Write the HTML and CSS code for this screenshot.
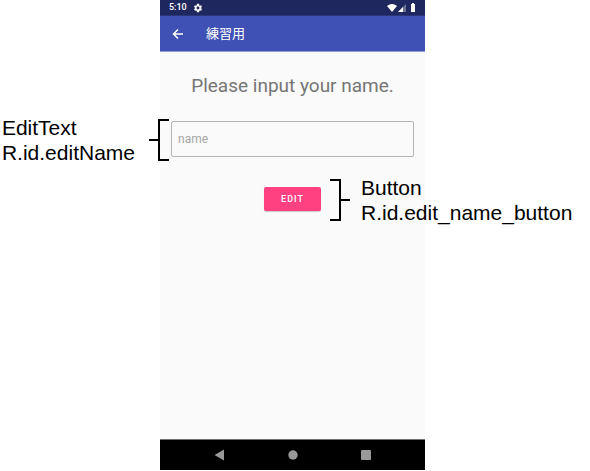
FILE: index.html
```html
<!DOCTYPE html>
<html lang="en">
<head>
<meta charset="utf-8">
<meta name="viewport" content="width=device-width, initial-scale=1">
<title>Name form</title>
<link rel="stylesheet" href="styles.css">
</head>
<body>
<div class="stage">
  <div class="phone">
    <div class="status-bar">
      <span>5:10</span>
      <svg class="gear" viewBox="0 0 24 24" width="10" height="10" aria-hidden="true"><path fill-rule="evenodd" d="M19.4 13a7.500 7.500 0 0 0 0-2l2.300-1.800-2.300-4-2.700 1.100a8 8 0 0 0-1.700-1L14.600 2H9.400L9 5.300a8 8 0 0 0-1.700 1L4.600 5.200l-2.300 4L4.600 11a7.500 7.500 0 0 0 0 2l-2.300 1.800 2.300 4 2.700-1.100a8 8 0 0 0 1.700 1l.4 3.300h5.200l.4-3.300a8 8 0 0 0 1.700-1l2.700 1.100 2.300-4zM12 15.500a3.500 3.500 0 1 1 0-7 3.500 3.500 0 0 1 0 7z"/></svg>
      <svg class="signals" viewBox="0 0 30 10" width="30" height="10" aria-hidden="true">
        <path d="M0 3Q5-1 10 3L5 9z"/>
        <path d="M19 1v8h-8z" opacity=".35"/>
        <path d="M16 4v5h-5z"/>
        <path d="M24 1h1V0h2v1h1v8h-4z"/>
      </svg>
    </div>
    <header class="app-bar">
      <button class="back" type="button" aria-label="Back">
        <svg viewBox="0 0 12 12" width="12" height="12" aria-hidden="true"><path d="M11 6H2M6 1.500L1.500 6 6 10.500"/></svg>
      </button>
      <h1 class="app-title" lang="ja">練習用</h1>
    </header>
    <main class="content">
      <label class="prompt" for="name">Please input your name.</label>
      <div class="field">
        <input class="name-input" id="name" type="text" placeholder="name">
        <div class="callout callout-left">
          <p class="note">EditText<br>R.id.editName</p>
          <svg viewBox="0 0 20 42" width="20" height="42" aria-hidden="true"><path d="M20 1H10v40h10M0 21h10"/></svg>
        </div>
      </div>
      <div class="action">
        <button class="edit" type="button">EDIT</button>
        <div class="callout callout-right">
          <svg viewBox="0 0 20 42" width="20" height="42" aria-hidden="true"><path d="M0 1h10v40H0M10 21h10"/></svg>
          <p class="note">Button<br>R.id.edit_name_button</p>
        </div>
      </div>
    </main>
    <nav class="nav-bar">
      <button type="button" aria-label="Back"><svg viewBox="0 0 12 12" width="12" height="12"><path d="M10 .5v11L.5 6z"/></svg></button>
      <button type="button" aria-label="Home"><svg viewBox="0 0 12 12" width="12" height="12"><circle cx="6" cy="6" r="4.700"/></svg></button>
      <button type="button" aria-label="Recent apps"><svg viewBox="0 0 12 12" width="12" height="12"><rect x="1" y="1" width="10" height="10" rx="1"/></svg></button>
    </nav>
  </div>
</div>
</body>
</html>
```
FILE: styles.css
```css
* {
  box-sizing: border-box;
}

body {
  margin: 0;
  background: #fff;
  font-family: Roboto, "Noto Sans CJK JP", sans-serif;
}

button {
  padding: 0;
  border: 0;
  background: none;
  font-family: inherit;
}

svg {
  display: block;
  flex: none;
}

.stage {
  display: grid;
  grid-template-columns: 160fr 265fr 165fr;
  min-height: 100vh;
  padding-bottom: 1px;
}

.phone {
  grid-column: 2;
  display: flex;
  flex-direction: column;
  min-width: 0;
  background: #fafafa;
}

.status-bar {
  display: flex;
  align-items: center;
  gap: 6px;
  height: 16px;
  padding: 0 8px 0 9px;
  background: #1e275e;
  border-bottom: 1px solid #2b3678;
  color: #fff;
  font-size: 9px;
  font-weight: 500;
  line-height: 15px;
}

.status-bar svg {
  fill: #fff;
}

.signals {
  margin-left: auto;
}

.app-bar {
  display: flex;
  align-items: center;
  gap: 22px;
  height: 36px;
  padding: 0 12px;
  background: #3f51b5;
  border-bottom: 1px solid #8f99d4;
}

.back svg {
  fill: none;
  stroke: #fff;
  stroke-width: 1.500;
}

.app-title {
  margin: 0;
  color: #fff;
  font-size: 13px;
  font-weight: 400;
  line-height: 20px;
}

.content {
  flex: 1;
  display: flex;
  flex-direction: column;
  padding: 22px 11px;
}

.prompt {
  color: #757575;
  font-size: 19px;
  line-height: 24px;
  text-align: center;
  white-space: nowrap;
}

.field {
  position: relative;
  margin-top: 23px;
}

.name-input {
  display: block;
  width: 100%;
  height: 36px;
  padding: 0 6px;
  border: 1px solid #b4b4b4;
  border-radius: 2px;
  background: #fafafa;
  color: #333;
  font-family: inherit;
  font-size: 12px;
}

.name-input::placeholder {
  color: #a6a6a6;
  opacity: 1;
}

.action {
  position: relative;
  align-self: center;
  margin-top: 30px;
}

.edit {
  display: block;
  width: 57px;
  height: 24px;
  border-radius: 2px;
  background: #ff4081;
  box-shadow: 0 1px 1px #0003;
  color: #fff;
  font-size: 9px;
  font-weight: 500;
  letter-spacing: 1px;
}

.callout {
  position: absolute;
  top: 50%;
  display: flex;
  align-items: center;
  padding-top: 2px;
  transform: translateY(-50%);
  color: #000;
}

.callout svg {
  fill: none;
  stroke: #000;
  stroke-width: 2;
}

.callout-left {
  right: 100%;
  gap: 14px;
  padding-right: 2px;
}

.callout-right {
  left: 100%;
  gap: 11px;
  padding-left: 9px;
}

.note {
  margin: 0;
  font-family: "Liberation Sans", Arial, sans-serif;
  font-size: 21px;
  line-height: 25px;
  white-space: nowrap;
}

.nav-bar {
  display: flex;
  justify-content: center;
  align-items: center;
  gap: 61px;
  height: 31px;
  border-top: 1px solid #707070;
  background: #000;
}

.nav-bar svg {
  fill: #999;
}
```
